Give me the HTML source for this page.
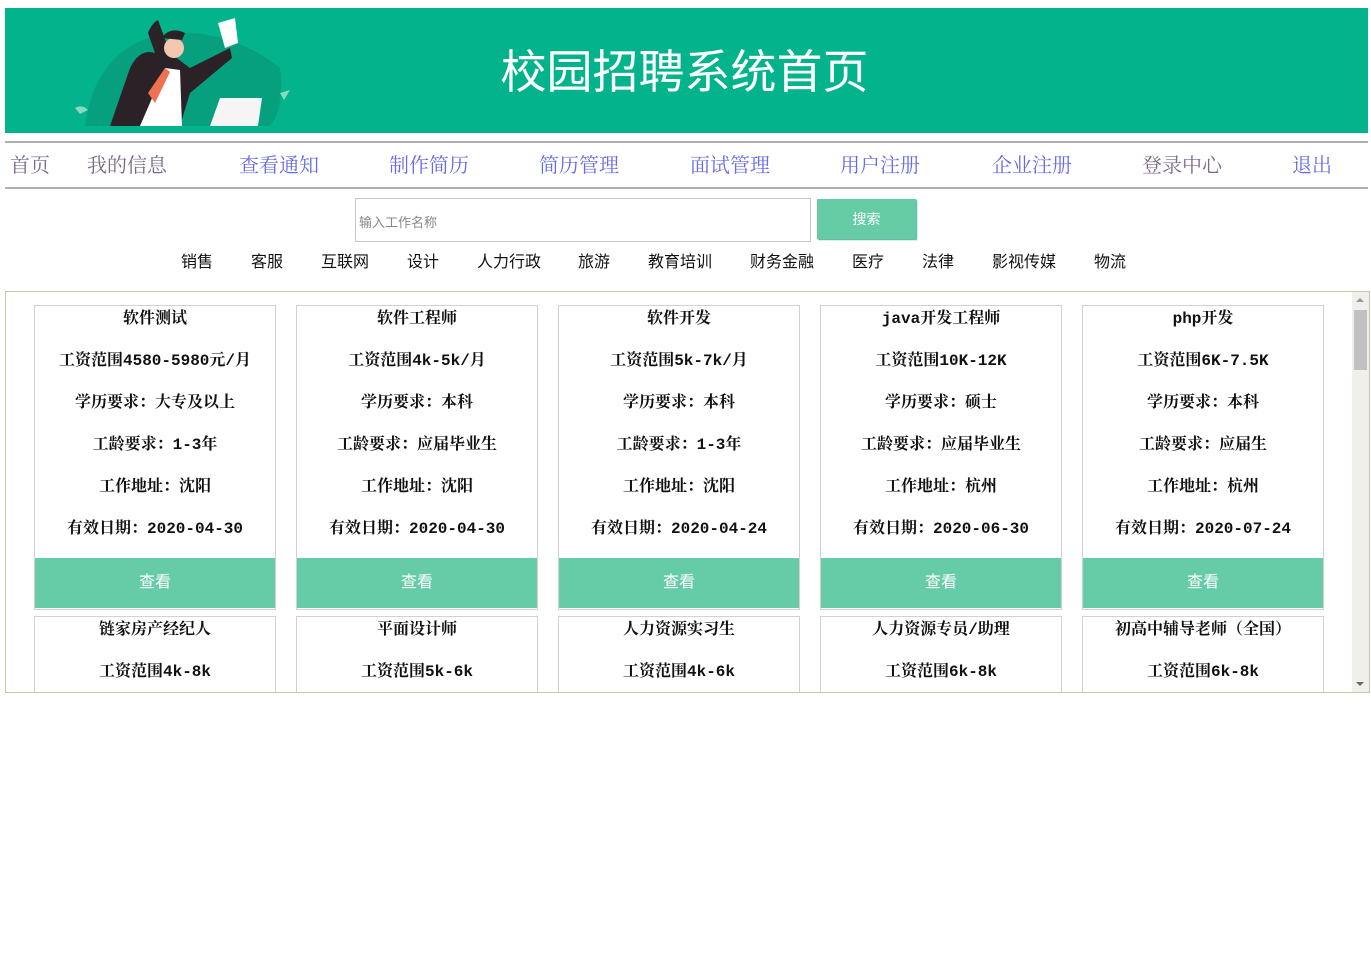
<!DOCTYPE html>
<html><head><meta charset="utf-8"><style>
*{margin:0;padding:0;box-sizing:border-box}
body{width:1371px;height:971px;background:#fff;position:relative;overflow:hidden;font-family:"Liberation Sans","Noto Sans CJK SC",sans-serif}
.hdr{position:absolute;left:5px;top:8px;width:1363px;height:125px;background:#03b38b}
.title{position:absolute;left:-2px;width:1363px;text-align:center;top:36px;font-size:46px;color:#fff;line-height:56px}
.line{position:absolute;left:5px;width:1363px;height:2px;background:#b0b0b0}
.nav{position:absolute;top:153px;font-family:"Liberation Serif","Noto Serif CJK SC",serif;font-size:20px;line-height:26px;color:#6a6ae8}
.v{color:#7a6a8a}
.inp{position:absolute;left:355px;top:198px;width:456px;height:44px;border:1px solid #c8c8c8;font-size:13px;color:#888;padding:13px 0 0 3px}
.btn{position:absolute;left:817px;top:199px;width:99px;height:40px;background:#66cca6;color:#fff;font-size:14px;text-align:center;line-height:40px;box-shadow:1px 1px 1px #4a9;}
.cat{position:absolute;top:253px;font-size:16px;color:#111;line-height:20px}
.box{position:absolute;left:5px;top:291px;width:1365px;height:402px;border:1px solid #c9c5a5;overflow:hidden}
.sb{position:absolute;right:0;top:0;width:17px;height:400px;background:#f1efeb}
.thumb{position:absolute;left:2px;top:18px;width:13px;height:60px;background:#c1c1c1}
.card{position:absolute;width:242px;height:305px;border:1px solid #d2d2d2;font-family:"Liberation Mono","Noto Serif CJK SC",serif;font-weight:bold;font-size:16px;color:#111;text-align:center;padding-top:2px}
.card p{height:42px;line-height:22px}
.card .b{position:absolute;left:0;right:0;top:252px;height:50px;background:#66cca8;color:#fff;font-family:"Liberation Sans","Noto Sans CJK SC",sans-serif;font-weight:normal;line-height:50px}
</style></head><body>
<div class="hdr">
<svg width="230" height="125" style="position:absolute;left:65px;top:0">
<path d="M15 118 Q25 40 95 25 Q160 20 210 60 Q215 100 200 118 Z" fill="#07a07e"/>
<path d="M40 118 L60 60 Q70 40 85 45 L78 25 Q82 15 88 12 L100 45 L120 60 L150 45 L160 40 L162 50 L120 85 L110 118 Z" fill="#2b2228"/>
<path d="M70 118 L95 60 L110 62 L112 118 Z" fill="#fff"/>
<path d="M78 85 L95 60 L100 64 L85 95 Z" fill="#f07050"/>
<circle cx="104" cy="40" r="10" fill="#f4c8b0"/>
<path d="M92 30 Q100 18 115 25 L112 32 Z" fill="#2b2228"/>
<path d="M148 15 L165 10 L168 35 L155 40 Z" fill="#fff"/>
<path d="M140 118 L150 90 L192 90 L188 118 Z" fill="#f5f5f5"/>
<path d="M5 100 Q12 96 18 102 L10 106 Z" fill="#8ad8c0"/>
<path d="M210 85 L220 82 L214 92 Z" fill="#8ad8c0"/>
</svg>
<div class="title">校园招聘系统首页</div>
</div>
<div class="line" style="top:141px"></div>
<div class="line" style="top:187px"></div>
<div class="nav v" style="left:10px">首页</div>
<div class="nav v" style="left:87px">我的信息</div>
<div class="nav" style="left:239px">查看通知</div>
<div class="nav" style="left:389px">制作简历</div>
<div class="nav" style="left:539px">简历管理</div>
<div class="nav" style="left:690px">面试管理</div>
<div class="nav" style="left:840px">用户注册</div>
<div class="nav" style="left:992px">企业注册</div>
<div class="nav v" style="left:1142px">登录中心</div>
<div class="nav" style="left:1292px">退出</div>
<div class="inp">输入工作名称</div>
<div class="btn">搜索</div>
<div class="cat" style="left:181px">销售</div>
<div class="cat" style="left:251px">客服</div>
<div class="cat" style="left:321px">互联网</div>
<div class="cat" style="left:407px">设计</div>
<div class="cat" style="left:477px">人力行政</div>
<div class="cat" style="left:578px">旅游</div>
<div class="cat" style="left:648px">教育培训</div>
<div class="cat" style="left:750px">财务金融</div>
<div class="cat" style="left:852px">医疗</div>
<div class="cat" style="left:922px">法律</div>
<div class="cat" style="left:992px">影视传媒</div>
<div class="cat" style="left:1094px">物流</div>
<div class="box">
<div class="card" style="left:28px;top:13px"><p>软件测试</p><p>工资范围4580-5980元/月</p><p>学历要求：大专及以上</p><p>工龄要求：1-3年</p><p>工作地址：沈阳</p><p>有效日期：2020-04-30</p><div class="b">查看</div></div>
<div class="card" style="left:290px;top:13px"><p>软件工程师</p><p>工资范围4k-5k/月</p><p>学历要求：本科</p><p>工龄要求：应届毕业生</p><p>工作地址：沈阳</p><p>有效日期：2020-04-30</p><div class="b">查看</div></div>
<div class="card" style="left:552px;top:13px"><p>软件开发</p><p>工资范围5k-7k/月</p><p>学历要求：本科</p><p>工龄要求：1-3年</p><p>工作地址：沈阳</p><p>有效日期：2020-04-24</p><div class="b">查看</div></div>
<div class="card" style="left:814px;top:13px"><p>java开发工程师</p><p>工资范围10K-12K</p><p>学历要求：硕士</p><p>工龄要求：应届毕业生</p><p>工作地址：杭州</p><p>有效日期：2020-06-30</p><div class="b">查看</div></div>
<div class="card" style="left:1076px;top:13px"><p>php开发</p><p>工资范围6K-7.5K</p><p>学历要求：本科</p><p>工龄要求：应届生</p><p>工作地址：杭州</p><p>有效日期：2020-07-24</p><div class="b">查看</div></div>
<div class="card" style="left:28px;top:324px"><p>链家房产经纪人</p><p>工资范围4k-8k</p></div>
<div class="card" style="left:290px;top:324px"><p>平面设计师</p><p>工资范围5k-6k</p></div>
<div class="card" style="left:552px;top:324px"><p>人力资源实习生</p><p>工资范围4k-6k</p></div>
<div class="card" style="left:814px;top:324px"><p>人力资源专员/助理</p><p>工资范围6k-8k</p></div>
<div class="card" style="left:1076px;top:324px"><p>初高中辅导老师（全国）</p><p>工资范围6k-8k</p></div>
<div class="sb"><div class="thumb"></div>
<div style="position:absolute;left:4px;top:6px;border:4px solid transparent;border-bottom:4px solid #999;border-top:0"></div>
<div style="position:absolute;left:4px;bottom:6px;border:4px solid transparent;border-top:4px solid #666;border-bottom:0"></div></div>
</div>
</body></html>
